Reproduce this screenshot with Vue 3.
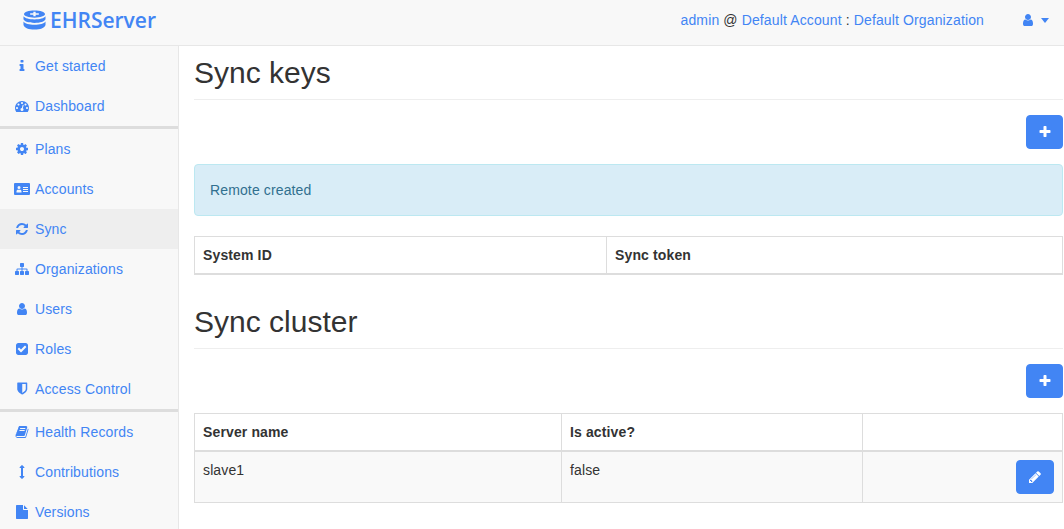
<script setup>
const ICONS = {
  info: 'M1216 1344v128q0 26-19 45t-45 19h-512q-26 0-45-19t-19-45v-128q0-26 19-45t45-19h64v-384h-64q-26 0-45-19t-19-45v-128q0-26 19-45t45-19h384q26 0 45 19t19 45v576h64q26 0 45 19t19 45zm-128-1152v192q0 26-19 45t-45 19h-256q-26 0-45-19t-19-45v-192q0-26 19-45t45-19h256q26 0 45 19t19 45z',
  dashboard: 'M384 1152q0-53-37.5-90.5t-90.5-37.5-90.5 37.5-37.5 90.5 37.5 90.5 90.5 37.5 90.5-37.5 37.5-90.5zm192-448q0-53-37.5-90.5t-90.5-37.5-90.5 37.5-37.5 90.5 37.5 90.5 90.5 37.5 90.5-37.5 37.5-90.5zm428 481l101-382q6-26-7.5-48.5t-38.5-29.5-48 6.5-30 39.5l-101 382q-60 5-107 43.5t-63 98.5q-20 77 20 146t117 89 146-20 89-117q16-60-6-117t-72-91zm660-33q0-53-37.5-90.5t-90.5-37.5-90.5 37.5-37.5 90.5 37.5 90.5 90.5 37.5 90.5-37.5 37.5-90.5zm-640-640q0-53-37.5-90.5t-90.5-37.5-90.5 37.5-37.5 90.5 37.5 90.5 90.5 37.5 90.5-37.5 37.5-90.5zm448 192q0-53-37.5-90.5t-90.5-37.5-90.5 37.5-37.5 90.5 37.5 90.5 90.5 37.5 90.5-37.5 37.5-90.5zm320 448q0 261-141 483-19 29-54 29h-1402q-35 0-54-29-141-221-141-483 0-182 71-348t191-286 286-191 348-71 348 71 286 191 191 286 71 348z',
  cog: 'M1152 896q0-106-75-181t-181-75-181 75-75 181 75 181 181 75 181-75 75-181zm512-109v222q0 12-8 23t-20 13l-185 28q-19 54-39 91 35 50 107 138 10 12 10 25t-9 23q-27 37-99 108t-94 71q-12 0-26-9l-138-108q-44 23-91 38-16 136-29 186-7 28-36 28h-222q-14 0-24.5-8.5t-11.5-21.5l-28-184q-49-16-90-37l-141 107q-10 9-25 9-14 0-25-11-126-114-165-168-7-10-7-23 0-12 8-23 15-21 51-66.5t54-70.5q-27-50-41-99l-183-27q-13-2-21-12.5t-8-23.5v-222q0-12 8-23t19-13l186-28q14-46 39-92-40-57-107-138-10-12-10-24 0-10 9-23 26-36 98.5-107.5t94.5-71.5q13 0 26 10l138 107q44-23 91-38 16-136 29-186 7-28 36-28h222q14 0 24.5 8.5t11.5 21.5l28 184q49 16 90 37l142-107q9-9 24-9 13 0 25 10 129 119 165 170 7 8 7 22 0 12-8 23-15 21-51 66.5t-54 70.5q26 50 41 98l183 28q13 2 21 12.5t8 23.5z',
  refresh: 'M1639 1056q0 5-1 7-64 268-268 434.5t-478 166.5q-146 0-282.5-55t-243.5-157l-129 129q-19 19-45 19t-45-19-19-45v-448q0-26 19-45t45-19h448q26 0 45 19t19 45-19 45l-137 137q71 66 161 102t187 36q134 0 250-65t186-179q11-17 53-117 8-23 30-23h192q13 0 22.5 9.5t9.5 22.5zm25-800v448q0 26-19 45t-45 19h-448q-26 0-45-19t-19-45 19-45l138-138q-148-137-349-137-134 0-250 65t-186 179q-11 17-53 117-8 23-30 23h-199q-13 0-22.5-9.5t-9.5-22.5v-7q65-268 270-434.5t480-166.5q146 0 284 55.5t245 156.5l130-129q19-19 45-19t45 19 19 45z',
  sitemap: 'M1792 1248v320q0 40-28 68t-68 28h-320q-40 0-68-28t-28-68v-320q0-40 28-68t68-28h96v-192h-512v192h96q40 0 68 28t28 68v320q0 40-28 68t-68 28h-320q-40 0-68-28t-28-68v-320q0-40 28-68t68-28h96v-192h-512v192h96q40 0 68 28t28 68v320q0 40-28 68t-68 28h-320q-40 0-68-28t-28-68v-320q0-40 28-68t68-28h96v-192q0-52 38-90t90-38h512v-192h-96q-40 0-68-28t-28-68v-320q0-40 28-68t68-28h320q40 0 68 28t28 68v320q0 40-28 68t-68 28h-96v192h512q52 0 90 38t38 90v192h96q40 0 68 28t28 68z',
  user: 'M1536 1399q0 109-62.5 187t-150.5 78h-854q-88 0-150.5-78t-62.5-187q0-85 8.5-160.5t31.5-152 58.5-131 94-89 134.5-34.5q131 128 313 128t313-128q76 0 134.5 34.5t94 89 58.5 131 31.5 152 8.5 160.5zm-256-887q0 159-112.5 271.5t-271.5 112.5-271.5-112.5-112.5-271.5 112.5-271.5 271.5-112.5 271.5 112.5 112.5 271.5z',
  check: 'M813 1299l614-614q19-19 19-45t-19-45l-102-102q-19-19-45-19t-45 19l-467 467-211-211q-19-19-45-19t-45 19l-102 102q-19 19-19 45t19 45l358 358q19 19 45 19t45-19zm851-883v960q0 119-84.5 203.5t-203.5 84.5h-960q-119 0-203.5-84.5t-84.5-203.5v-960q0-119 84.5-203.5t203.5-84.5h960q119 0 203.5 84.5t84.5 203.5z',
  shield: 'M1376 896v-640h-448v1137q119-63 213-137 235-184 235-360zm192-768v768q0 86-33.5 170.5t-83 150-118 127.5-126.5 103-121 77.5-89.5 49.5-42.5 20q-12 6-26 6t-26-6q-16-7-42.5-20t-89.5-49.5-121-77.5-126.5-103-118-127.5-83-150-33.5-170.5v-768q0-26 19-45t45-19h1152q26 0 45 19t19 45z',
  book: 'M1703 478q40 57 18 129l-275 906q-19 64-76.5 107.5t-122.5 43.5h-923q-77 0-148.5-53.5t-99.5-131.5q-24-67-2-127 0-4 3-27t4-37q1-8-3-21.5t-3-19.5q2-11 8-21t16.5-23.5 16.5-23.5q23-38 45-91.5t30-91.5q3-10 .5-30t-.5-28q3-11 17-28t17-23q21-36 42-92t25-90q1-9-2.5-32t.5-28q4-13 22-30.5t22-22.5q19-26 42.5-84.5t27.5-96.5q1-8-3-25.5t-2-26.5q2-8 9-18t18-23 17-21q8-12 16.5-30.5t15-35 16-36 19.5-32 26.5-23.5 36-11.5 47.5 5.5l-1 3q38-9 51-9h761q74 0 114 56t18 130l-274 906q-36 119-71.5 153.5t-128.5 34.5h-869q-27 0-38 15-11 16-1 43 24 70 144 70h923q29 0 56-15.5t35-41.5l300-987q7-22 5-57 38 15 59 43zm-1064 2q-4 13 2 22.5t20 9.5h608q13 0 25.5-9.5t16.5-22.5l21-64q4-13-2-22.5t-20-9.5h-608q-13 0-25.5 9.5t-16.5 22.5zm-83 256q-4 13 2 22.5t20 9.5h608q13 0 25.5-9.5t16.5-22.5l21-64q4-13-2-22.5t-20-9.5h-608q-13 0-25.5 9.5t-16.5 22.5z',
  arrows: 'M1216 320q0 26-19 45t-45 19h-128v1024h128q26 0 45 19t19 45-19 45l-256 256q-19 19-45 19t-45-19l-256-256q-19-19-19-45t19-45 45-19h128v-1024h-128q-26 0-45-19t-19-45 19-45l256-256q19-19 45-19t45 19l256 256q19 19 19 45z',
  file: 'M1152 512v-472q22 14 36 28l408 408q14 14 28 36h-472zm-128 32q0 40 28 68t68 28h544v1056q0 40-28 68t-68 28h-1344q-40 0-68-28t-28-68v-1600q0-40 28-68t68-28h800v544z',
  plus: 'M1600 736v192q0 40-28 68t-68 28h-416v416q0 40-28 68t-68 28h-192q-40 0-68-28t-28-68v-416h-416q-40 0-68-28t-28-68v-192q0-40 28-68t68-28h416v-416q0-40 28-68t68-28h192q40 0 68 28t28 68v416h416q40 0 68 28t28 68z',
  pencil: 'M491 1536l91-91-235-235-91 91v107h128v128h107zm523-928q0-22-22-22-10 0-17 7l-542 542q-7 7-7 17 0 22 22 22 10 0 17-7l542-542q7-7 7-17zm-54-192l416 416-832 832h-416v-416zm683 96q0 53-37 90l-166 166-416-416 166-165q36-38 90-38 53 0 91 38l235 234q37 39 37 91z',
}

const navGroups = [
  [
    { label: 'Get started', icon: 'info' },
    { label: 'Dashboard', icon: 'dashboard' },
  ],
  [
    { label: 'Plans', icon: 'cog' },
    { label: 'Accounts', icon: 'card' },
    { label: 'Sync', icon: 'refresh', active: true },
    { label: 'Organizations', icon: 'sitemap' },
    { label: 'Users', icon: 'user' },
    { label: 'Roles', icon: 'check' },
    { label: 'Access Control', icon: 'shield' },
  ],
  [
    { label: 'Health Records', icon: 'book' },
    { label: 'Contributions', icon: 'arrows' },
    { label: 'Versions', icon: 'file' },
  ],
]
</script>

<template>
  <div class="page">
    <header class="navbar">
      <a class="brand">
        <svg class="brand__logo" viewBox="0 0 24 20" aria-hidden="true">
          <path fill="currentColor" fill-rule="evenodd" d="M12 0c6 0 11 1.600 11 3.800S18 7.600 12 7.600 1 6 1 3.800 6 0 12 0zM10.800 1.500v1.500H7.500v1.600h3.300v1.500h2.400V4.600h3.300V3h-3.300V1.500z" />
          <path fill="currentColor" d="M0.500 6.200C2 8.400 6.500 9.400 12 9.400s10-1 11.500-3.200v3C22.500 11.700 18 13 12 13S1.500 11.700 0.500 9.200z" />
          <path fill="currentColor" d="M0.500 11.500C2 13.900 6.500 14.900 12 14.900s10-1 11.500-3.400v3.700C22.500 18.200 18 20 12 20S1.500 18.200 0.500 15.200z" />
        </svg>
        <span class="brand__name">EHRServer</span>
      </a>
      <div class="navbar__right">
        <span class="context">
          <a>admin</a> @ <a>Default Account</a> : <a>Default Organization</a>
        </span>
        <a class="user-menu">
          <svg class="icon" viewBox="0 0 1792 1792" aria-hidden="true"><path fill="currentColor" :d="ICONS.user" /></svg>
          <span class="caret"></span>
        </a>
      </div>
    </header>

    <div class="layout">
      <aside class="sidebar">
        <ul v-for="(group, i) in navGroups" :key="i" class="nav-group">
          <li v-for="item in group" :key="item.label" class="nav-item" :class="{ 'nav-item--active': item.active }">
            <span class="nav-item__icon">
              <svg v-if="item.icon === 'card'" class="icon icon--card" viewBox="0 0 16 12" aria-hidden="true">
                <path fill="currentColor" fill-rule="evenodd" d="M1 0h14a1 1 0 0 1 1 1v10a1 1 0 0 1-1 1H1a1 1 0 0 1-1-1V1a1 1 0 0 1 1-1zM5 3a1.500 1.500 0 1 0 0 3 1.500 1.500 0 0 0 0-3zM2.500 9.500h5V8.200C7.500 7.300 6.800 6.700 6 6.700H4c-.8 0-1.500.6-1.500 1.500zM9 4v1h5V4zM9 6v1h5V6zM9 8v1h5V8z" />
              </svg>
              <svg v-else class="icon" viewBox="0 0 1792 1792" aria-hidden="true"><path fill="currentColor" :d="ICONS[item.icon]" /></svg>
            </span>
            <span>{{ item.label }}</span>
          </li>
        </ul>
      </aside>

      <main class="content">
        <h1 class="page-header">Sync keys</h1>
        <div class="actions">
          <button class="btn btn--add" type="button">
            <svg class="icon" viewBox="0 0 1792 1792" aria-hidden="true"><path fill="currentColor" :d="ICONS.plus" /></svg>
          </button>
        </div>
        <div class="alert">Remote created</div>
        <table class="table">
          <colgroup><col style="width: 412px" /><col /></colgroup>
          <thead>
            <tr><th>System ID</th><th>Sync token</th></tr>
          </thead>
        </table>

        <h1 class="page-header">Sync cluster</h1>
        <div class="actions">
          <button class="btn btn--add" type="button">
            <svg class="icon" viewBox="0 0 1792 1792" aria-hidden="true"><path fill="currentColor" :d="ICONS.plus" /></svg>
          </button>
        </div>
        <table class="table">
          <colgroup><col style="width: 367px" /><col style="width: 301px" /><col /></colgroup>
          <thead>
            <tr><th>Server name</th><th>Is active?</th><th></th></tr>
          </thead>
          <tbody>
            <tr>
              <td>slave1</td>
              <td>false</td>
              <td class="table__actions">
                <button class="btn btn--edit" type="button">
                  <svg class="icon" viewBox="0 0 1792 1792" aria-hidden="true"><path fill="currentColor" :d="ICONS.pencil" /></svg>
                </button>
              </td>
            </tr>
          </tbody>
        </table>
      </main>
    </div>
  </div>
</template>

<style>
html,
body {
  margin: 0;
  overflow: hidden;
  background: #fff;
}
</style>

<style scoped>
.page {
  height: 529px;
  overflow: hidden;
  font-family: "Liberation Sans", Arial, sans-serif;
  font-size: 14px;
  line-height: 20px;
  letter-spacing: 0.13px;
  color: #333;
}

a {
  color: #4285f4;
}

.icon {
  display: block;
  width: 14px;
  height: 14px;
}

.navbar {
  display: flex;
  align-items: center;
  justify-content: space-between;
  height: 45px;
  padding: 0 15px 0 23px;
  background: #f8f8f8;
  border-bottom: 1px solid #e7e7e7;
}

.brand {
  display: flex;
  align-items: center;
  gap: 4px;
}

.brand__logo {
  width: 23px;
  height: 20px;
  margin-top: -5px;
}

.brand__name {
  font-family: "Open Sans", sans-serif;
  font-size: 21px;
  font-weight: 600;
  line-height: 30px;
  letter-spacing: 0;
  margin-top: -5px;
}

.navbar__right {
  display: flex;
  align-items: center;
  margin-top: -5px;
}

.user-menu {
  display: flex;
  align-items: center;
  gap: 6px;
  margin-left: 37px;
}

.caret {
  width: 0;
  height: 0;
  border-top: 5px solid #4285f4;
  border-left: 4.500px solid transparent;
  border-right: 4.500px solid transparent;
}

.layout {
  display: flex;
}

.sidebar {
  flex: 0 0 178px;
  height: 483px;
  background: #f8f8f8;
  border-right: 1px solid #e7e7e7;
}

.nav-group {
  list-style: none;
  margin: 0;
  padding: 0;
  border-bottom: 3px solid #ddd;
}

.nav-item {
  display: flex;
  align-items: center;
  height: 40px;
  padding-left: 13px;
  color: #4285f4;
}

.nav-item--active {
  background: #eee;
}

.nav-item__icon {
  display: flex;
  justify-content: center;
  width: 18px;
  margin-right: 4px;
}

.icon--card {
  flex: none;
  width: 16px;
  height: 12px;
}

.content {
  flex: 1;
  min-width: 0;
  display: flex;
  flex-direction: column;
  padding: 0 1px 0 15px;
}

.page-header {
  margin: 10px 0 15px;
  padding-bottom: 10px;
  font-size: 30px;
  font-weight: 500;
  line-height: 33px;
  letter-spacing: 0;
  border-bottom: 1px solid #eee;
}

.actions {
  display: flex;
  justify-content: flex-end;
  margin-bottom: 15px;
}

.btn {
  display: flex;
  align-items: center;
  justify-content: center;
  height: 34px;
  padding: 0;
  color: #fff;
  background: #4285f4;
  border: 1px solid #4285f4;
  border-radius: 4px;
}

.btn--add {
  width: 37px;
}

.btn--edit {
  width: 38px;
  margin-left: auto;
}

.alert {
  padding: 15px;
  margin-bottom: 20px;
  color: #31708f;
  background: #d9edf7;
  border: 1px solid #bce8f1;
  border-radius: 4px;
}

.table {
  width: 100%;
  margin-bottom: 20px;
  border-collapse: collapse;
  table-layout: fixed;
  border: 1px solid #ddd;
}

.table th,
.table td {
  padding: 8px;
  text-align: left;
  vertical-align: top;
  border: 1px solid #ddd;
}

.table th {
  border-bottom: 2px solid #ddd;
  font-weight: 700;
}

.table tbody tr {
  background: #f9f9f9;
}
</style>
